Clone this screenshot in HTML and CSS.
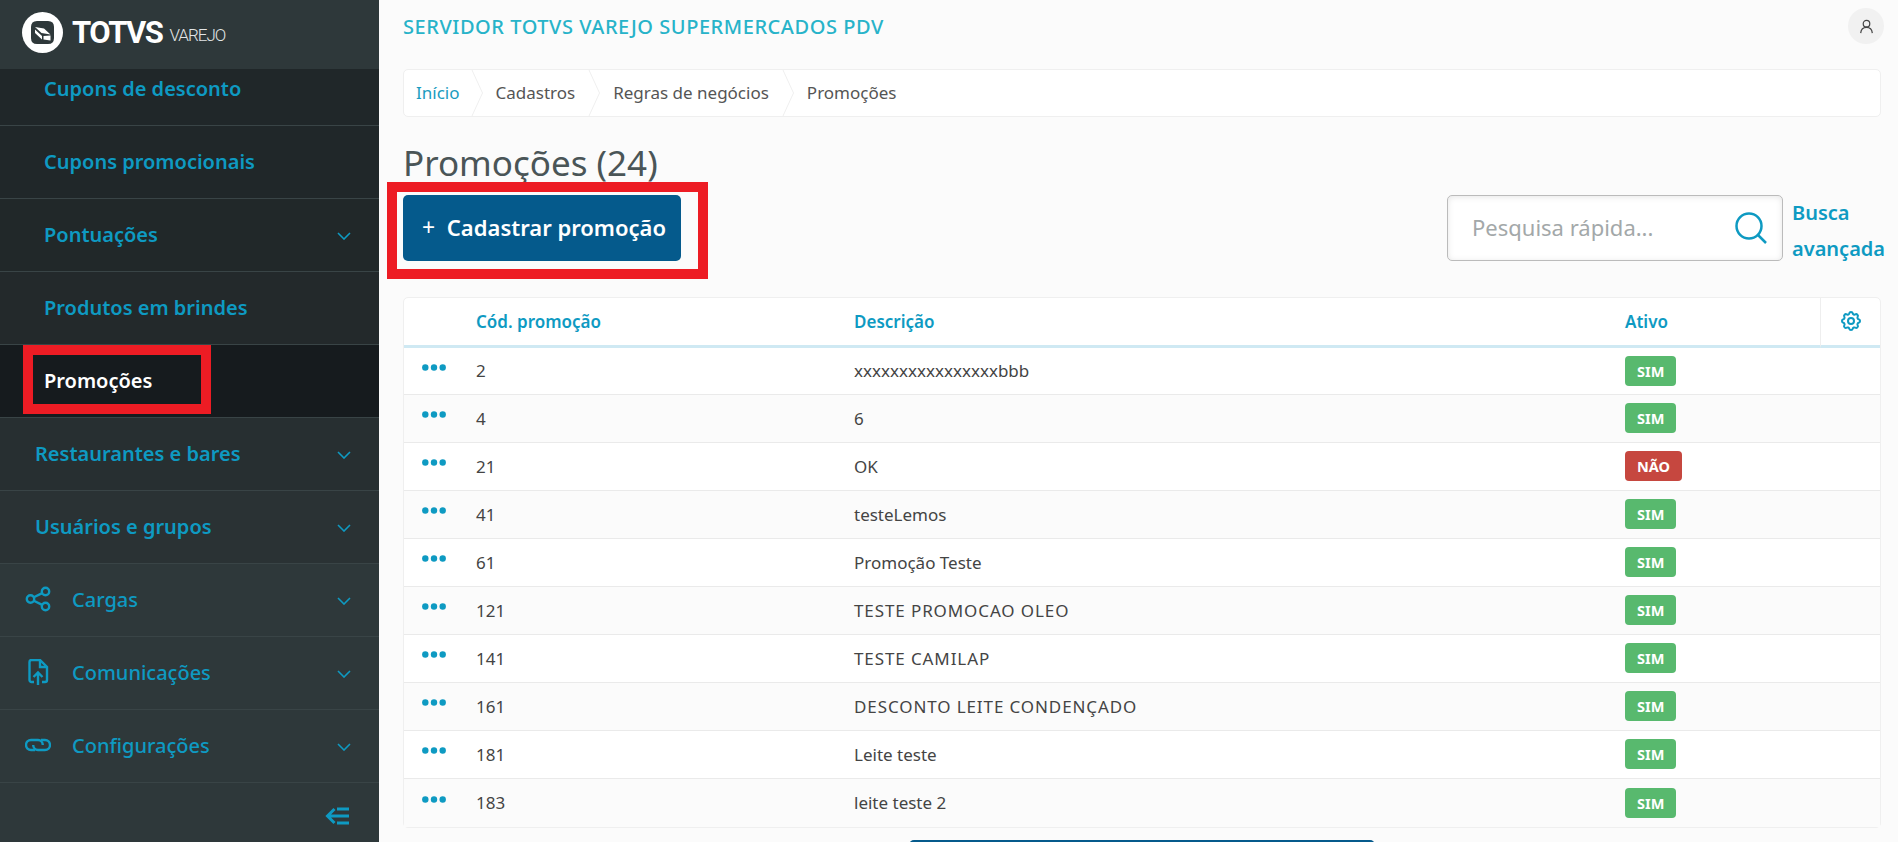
FILE: index.html
```html
<!DOCTYPE html>
<html lang="pt-BR">
<head>
    <meta charset="UTF-8">
    <title>Promoções</title>
    <link rel="stylesheet" href="styles.css">
</head>
<body>
    <aside class="sidebar">
        <div class="brand">
            <svg class="brand-logo" viewBox="0 0 41 41">
                <circle cx="20.500" cy="20.500" r="20.500" fill="#fff"/>
                <path d="M9 15q0-6 6-6h11q6 0 6 6v11q0 6-6 6H15q-6 0-6-6z" fill="#2e383a"/>
                <path d="M13 15l9 1.500 6.500 6-9-1.500zM13 17.500l7 6.500v3.500l-7-6.500zM21.500 24l7-.500v5l-7-1z" fill="#fff"/>
            </svg>
            <span class="brand-name">TOTVS</span>
            <span class="brand-sub">VAREJO</span>
        </div>
        <nav class="menu">
            <a class="menu-item sub row-1">Cupons de desconto</a>
            <a class="menu-item sub row-2">Cupons promocionais</a>
            <a class="menu-item sub row-3">Pontuações
                <svg class="chevron" viewBox="0 0 14 8"><path d="M1 1l6 6 6-6"/></svg>
            </a>
            <a class="menu-item sub row-4">Produtos em brindes</a>
            <a class="menu-item sub active">Promoções</a>
            <a class="menu-item group row-6">Restaurantes e bares
                <svg class="chevron" viewBox="0 0 14 8"><path d="M1 1l6 6 6-6"/></svg>
            </a>
            <a class="menu-item group row-7">Usuários e grupos
                <svg class="chevron" viewBox="0 0 14 8"><path d="M1 1l6 6 6-6"/></svg>
            </a>
            <a class="menu-item top row-8">
                <svg class="menu-icon" viewBox="0 0 26 26"><circle cx="5.500" cy="13" r="3.700"/><circle cx="20.500" cy="5.500" r="3.700"/><circle cx="20.500" cy="20.500" r="3.700"/><path d="M8.800 11.300l8.400-4.200M8.800 14.700l8.400 4.200"/></svg>
                Cargas
                <svg class="chevron" viewBox="0 0 14 8"><path d="M1 1l6 6 6-6"/></svg>
            </a>
            <a class="menu-item top row-9">
                <svg class="menu-icon" viewBox="0 0 26 26"><path d="M9 23H6.500a2 2 0 0 1-2-2V3a2 2 0 0 1 2-2h8.500l7 7v13a2 2 0 0 1-2 2H17"/><path d="M15 1v7h7"/><path d="M13 26V14M8.500 18l4.500-4.500 4.500 4.500"/></svg>
                Comunicações
                <svg class="chevron" viewBox="0 0 14 8"><path d="M1 1l6 6 6-6"/></svg>
            </a>
            <a class="menu-item top row-10">
                <svg class="menu-icon" viewBox="0 0 26 26"><path d="M10 18H6a5 5 0 0 1 0-10h7a5 5 0 0 1 4.800 5"/><path d="M16 8h4a5 5 0 0 1 0 10h-7a5 5 0 0 1-4.800-5"/></svg>
                Configurações
                <svg class="chevron" viewBox="0 0 14 8"><path d="M1 1l6 6 6-6"/></svg>
            </a>
        </nav>
        <div class="collapse">
            <svg viewBox="0 0 24 18"><path d="M9.500 2L2.500 9l7 7M2.500 9H24M12 2h12M12 16h12"/></svg>
        </div>
    </aside>

    <main class="content">
        <header class="topbar">
            <span class="server">SERVIDOR TOTVS VAREJO SUPERMERCADOS PDV</span>
            <span class="avatar">
                <svg viewBox="0 0 16 16"><circle cx="8" cy="5" r="3.500"/><path d="M1.800 15c.4-3.800 2.800-6 6.200-6s5.800 2.200 6.200 6"/></svg>
            </span>
        </header>

        <div class="breadcrumb">
            <a class="crumb first">Início</a>
            <span class="crumb">Cadastros</span>
            <span class="crumb">Regras de negócios</span>
            <span class="crumb last">Promoções</span>
        </div>

        <h1>Promoções (24)</h1>

        <div class="toolbar">
            <button class="btn-primary"><span class="plus">+</span> Cadastrar promoção</button>
            <div class="search-wrap">
                <div class="search">
                    <span class="placeholder">Pesquisa rápida...</span>
                    <svg viewBox="0 0 32 32"><circle cx="14" cy="14" r="12.500"/><path d="M23 23l8 8"/></svg>
                </div>
                <a class="advanced">Busca avançada</a>
            </div>
        </div>

        <table class="grid">
            <thead>
                <tr>
                    <th class="col-actions"></th>
                    <th class="col-code">Cód. promoção</th>
                    <th class="col-desc">Descrição</th>
                    <th class="col-active">Ativo</th>
                    <th class="col-gear">
                        <svg viewBox="0 0 24 24"><circle cx="12" cy="12" r="3"/><path d="M10.300 4.300c.4-1.800 3-1.800 3.400 0a1.700 1.700 0 0 0 2.600 1.100c1.500-.9 3.300.8 2.400 2.400a1.700 1.700 0 0 0 1 2.500c1.800.4 1.800 3 0 3.400a1.700 1.700 0 0 0-1 2.600c.9 1.500-.9 3.300-2.400 2.400a1.700 1.700 0 0 0-2.600 1c-.4 1.800-3 1.800-3.400 0a1.700 1.700 0 0 0-2.600-1c-1.500.9-3.300-.9-2.400-2.400a1.700 1.700 0 0 0-1-2.600c-1.800-.4-1.800-3 0-3.400a1.700 1.700 0 0 0 1-2.500c-.9-1.600.9-3.300 2.400-2.400 1 .6 2.300.1 2.600-1.100z"/></svg>
                    </th>
                </tr>
            </thead>
            <tbody>
                <tr><td class="dots"><svg viewBox="0 0 24 7"><circle cx="3.300" cy="3.500" r="3.200"/><circle cx="12" cy="3.500" r="3.200"/><circle cx="20.700" cy="3.500" r="3.200"/></svg></td><td>2</td><td>xxxxxxxxxxxxxxxxbbb</td><td><span class="tag yes">SIM</span></td><td></td></tr>
                <tr><td class="dots"><svg viewBox="0 0 24 7"><circle cx="3.300" cy="3.500" r="3.200"/><circle cx="12" cy="3.500" r="3.200"/><circle cx="20.700" cy="3.500" r="3.200"/></svg></td><td>4</td><td>6</td><td><span class="tag yes">SIM</span></td><td></td></tr>
                <tr><td class="dots"><svg viewBox="0 0 24 7"><circle cx="3.300" cy="3.500" r="3.200"/><circle cx="12" cy="3.500" r="3.200"/><circle cx="20.700" cy="3.500" r="3.200"/></svg></td><td>21</td><td>OK</td><td><span class="tag no">NÃO</span></td><td></td></tr>
                <tr><td class="dots"><svg viewBox="0 0 24 7"><circle cx="3.300" cy="3.500" r="3.200"/><circle cx="12" cy="3.500" r="3.200"/><circle cx="20.700" cy="3.500" r="3.200"/></svg></td><td>41</td><td>testeLemos</td><td><span class="tag yes">SIM</span></td><td></td></tr>
                <tr><td class="dots"><svg viewBox="0 0 24 7"><circle cx="3.300" cy="3.500" r="3.200"/><circle cx="12" cy="3.500" r="3.200"/><circle cx="20.700" cy="3.500" r="3.200"/></svg></td><td>61</td><td>Promoção Teste</td><td><span class="tag yes">SIM</span></td><td></td></tr>
                <tr><td class="dots"><svg viewBox="0 0 24 7"><circle cx="3.300" cy="3.500" r="3.200"/><circle cx="12" cy="3.500" r="3.200"/><circle cx="20.700" cy="3.500" r="3.200"/></svg></td><td>121</td><td class="caps">TESTE PROMOCAO OLEO</td><td><span class="tag yes">SIM</span></td><td></td></tr>
                <tr><td class="dots"><svg viewBox="0 0 24 7"><circle cx="3.300" cy="3.500" r="3.200"/><circle cx="12" cy="3.500" r="3.200"/><circle cx="20.700" cy="3.500" r="3.200"/></svg></td><td>141</td><td class="caps">TESTE CAMILAP</td><td><span class="tag yes">SIM</span></td><td></td></tr>
                <tr><td class="dots"><svg viewBox="0 0 24 7"><circle cx="3.300" cy="3.500" r="3.200"/><circle cx="12" cy="3.500" r="3.200"/><circle cx="20.700" cy="3.500" r="3.200"/></svg></td><td>161</td><td class="caps">DESCONTO LEITE CONDENÇADO</td><td><span class="tag yes">SIM</span></td><td></td></tr>
                <tr><td class="dots"><svg viewBox="0 0 24 7"><circle cx="3.300" cy="3.500" r="3.200"/><circle cx="12" cy="3.500" r="3.200"/><circle cx="20.700" cy="3.500" r="3.200"/></svg></td><td>181</td><td>Leite teste</td><td><span class="tag yes">SIM</span></td><td></td></tr>
                <tr><td class="dots"><svg viewBox="0 0 24 7"><circle cx="3.300" cy="3.500" r="3.200"/><circle cx="12" cy="3.500" r="3.200"/><circle cx="20.700" cy="3.500" r="3.200"/></svg></td><td>183</td><td>leite teste 2</td><td><span class="tag yes">SIM</span></td><td></td></tr>
            </tbody>
        </table>

        <div class="more"></div>
    </main>

    <div class="mark mark-menu"></div>
    <div class="mark mark-button"></div>
</body>
</html>
```

FILE: styles.css
```css
* {
    box-sizing: border-box;
}
html, body {
    height: 842px;
    margin: 0;
    overflow: hidden;
}
body {
    display: flex;
    font-family: "Noto Sans", Arial, sans-serif;
    background-color: #fbfbfb;
    color: #444;
}
.sidebar {
    width: 379px;
    height: 842px;
    flex-shrink: 0;
    display: flex;
    flex-direction: column;
    background-color: #2e383a;
    overflow: hidden;
}
.brand {
    height: 69px;
    flex-shrink: 0;
    display: flex;
    align-items: center;
    padding-left: 22px;
    padding-bottom: 4px;
    background-color: #2e383a;
    color: #fff;
    font-family: Roboto, Arial, sans-serif;
}
.brand-logo {
    width: 41px;
    height: 41px;
    margin-right: 9px;
}
.brand-name {
    font-size: 31px;
    font-weight: 700;
    letter-spacing: -1.500px;
    margin-right: 7px;
}
.brand-sub {
    font-size: 17px;
    font-weight: 300;
    letter-spacing: -1px;
    color: #e3e6e6;
    margin-top: 4px;
}
.menu {
    flex: 1;
    overflow: hidden;
}
.menu-item {
    height: 73px;
    display: flex;
    align-items: center;
    padding-bottom: 2px;
    font-size: 20px;
    font-weight: 600;
    color: #0e9ac2;
    border-bottom: 1px solid #394446;
    position: relative;
}
.menu-item.sub {
    padding-left: 44px;
}
.menu-item.group {
    padding-left: 35px;
}
.menu-item.top {
    padding-left: 25px;
    font-weight: 500;
}
.row-1 { height: 57px; background-color: #202729; padding-bottom: 18px; }
.row-2 { background-color: #202729; }
.row-3 { background-color: #212829; }
.row-4 { background-color: #23292b; }
.active { background-color: #161b1e; color: #fff; }
.row-6 { background-color: #272f31; }
.row-7 { background-color: #2a3234; }
.row-8, .row-9, .row-10 { background-color: #2e383a; }
.chevron {
    position: absolute;
    right: 28px;
    top: 33px;
    width: 14px;
    height: 8px;
    fill: none;
    stroke: #0e9ac2;
    stroke-width: 1.600;
}
.menu-icon {
    width: 26px;
    height: 26px;
    margin-right: 21px;
    fill: none;
    stroke: #0e9ac2;
    stroke-width: 2.400;
}
.collapse {
    height: 59px;
    flex-shrink: 0;
    display: flex;
    align-items: center;
    justify-content: flex-end;
    padding: 7px 30px 0 0;
}
.collapse svg {
    width: 24px;
    height: 18px;
    fill: none;
    stroke: #0e9ac2;
    stroke-width: 3;
}

.content {
    flex: 1;
    min-width: 0;
    padding: 0 17px 0 24px;
}
.topbar {
    height: 57px;
    display: flex;
    align-items: center;
    justify-content: space-between;
    padding-bottom: 5px;
}
.server {
    font-size: 20px;
    font-weight: 500;
    letter-spacing: .55px;
    color: #27b3c9;
}
.avatar {
    width: 36px;
    height: 36px;
    margin-right: -3px;
    border-radius: 50%;
    background-color: #f1f1f1;
    display: flex;
    align-items: center;
    justify-content: center;
}
.avatar svg {
    width: 15px;
    height: 15px;
    fill: none;
    stroke: #444;
    stroke-width: 1.300;
}
.breadcrumb {
    height: 48px;
    margin-top: 12px;
    display: flex;
    align-items: stretch;
    background-color: #fff;
    border: 1px solid #efefef;
    border-radius: 5px;
    font-size: 17px;
    color: #555;
}
.crumb {
    display: flex;
    align-items: center;
    padding: 0 25px 2px 13px;
    position: relative;
}
.crumb.first {
    padding-left: 12px;
    padding-right: 23px;
    color: #1a9cc0;
}
/* seta do breadcrumb: duas metades inclinadas */
.crumb::before,
.crumb::after {
    content: "";
    position: absolute;
    right: 0;
    height: 50%;
    border-right: 1px solid #efefef;
}
.crumb::before {
    top: 0;
    transform-origin: bottom;
    transform: skewX(24.600deg);
}
.crumb::after {
    bottom: 0;
    transform-origin: top;
    transform: skewX(-24.600deg);
}
.crumb.last::before,
.crumb.last::after {
    display: none;
}
h1 {
    margin: 0;
    height: 65px;
    padding-top: 23px;
    font-size: 35px;
    font-weight: 400;
    line-height: 46px;
    color: #4a5557;
}
.toolbar {
    height: 102px;
    margin-top: 13px;
    display: flex;
    justify-content: space-between;
    align-items: flex-start;
}
.btn-primary {
    width: 278px;
    height: 66px;
    padding: 0 2px 3px 6px;
    border: 0;
    border-radius: 5px;
    background-color: #055a8c;
    color: #fff;
    font-family: inherit;
    font-size: 22px;
    font-weight: 600;
}
.plus {
    font-weight: 400;
    font-size: 23px;
    margin-right: 6px;
}
.search-wrap {
    display: flex;
    align-items: flex-start;
    margin-right: -2px;
}
.search {
    width: 336px;
    height: 66px;
    display: flex;
    align-items: center;
    justify-content: space-between;
    padding: 0 15px 0 24px;
    background-color: #fff;
    border: 1px solid #bbb;
    border-radius: 5px;
    box-shadow: inset 0 1px 6px rgba(0,0,0,0.1);
    font-size: 22px;
    color: #a3a8a9;
}
.placeholder {
    margin-bottom: 2px;
}
.search svg {
    width: 32px;
    height: 32px;
    fill: none;
    stroke: #0e9ac2;
    stroke-width: 2.500;
}
.advanced {
    width: 91px;
    margin-left: 9px;
    font-size: 20px;
    font-weight: 600;
    line-height: 36px;
    color: #0e9ac2;
}
.grid {
    width: 100%;
    border-collapse: separate;
    border-spacing: 0;
    table-layout: fixed;
    background-color: #fff;
    border: 1px solid #efefef;
    border-radius: 5px;
    font-size: 17px;
}
.grid th {
    height: 50px;
    text-align: left;
    padding: 0;
    font-size: 17px;
    font-weight: 600;
    color: #0e9ac2;
    border-bottom: 3px solid #cfe9f3;
}
.col-actions { width: 72px; }
.col-code { width: 378px; }
.col-active { width: 195px; }
.col-gear {
    width: 60px;
    border-left: 1px solid #eee;
    text-align: center !important;
}
.col-gear svg {
    width: 24px;
    height: 24px;
    margin-top: 4px;
    fill: none;
    stroke: #0e9ac2;
    stroke-width: 2;
}
.grid td {
    height: 48px;
    padding: 0 0 1px;
    color: #444;
    border-bottom: 1px solid #eaeaea;
}
.grid tbody tr:first-child td {
    height: 47px;
}
.grid tbody tr:nth-child(even) td {
    background-color: #fbfbfb;
}
.grid tbody tr:last-child td {
    border-bottom: 0;
}
.grid td.caps {
    letter-spacing: .9px;
}
.grid td.dots {
    padding-left: 18px;
}
.dots svg {
    display: block;
    width: 24px;
    height: 7px;
    margin-bottom: 7px;
    fill: #0e9ac2;
}
.tag {
    display: inline-block;
    height: 30px;
    padding: 0 12px;
    border-radius: 4px;
    font-size: 14.500px;
    font-weight: 700;
    line-height: 30px;
    color: #fff;
    vertical-align: middle;
}
.tag.yes { background-color: #58b96e; }
.tag.no { background-color: #c6473f; }
.more {
    width: 466px;
    height: 40px;
    margin: 12px 0 0 506px;
    border-radius: 5px;
    background-color: #055a8c;
}

/* marcações vermelhas do print */
.mark {
    position: absolute;
    border: 10px solid #ed1c24;
}
.mark-menu {
    left: 23px;
    top: 345px;
    width: 188px;
    height: 69px;
}
.mark-button {
    left: 387px;
    top: 182px;
    width: 321px;
    height: 97px;
}
```
